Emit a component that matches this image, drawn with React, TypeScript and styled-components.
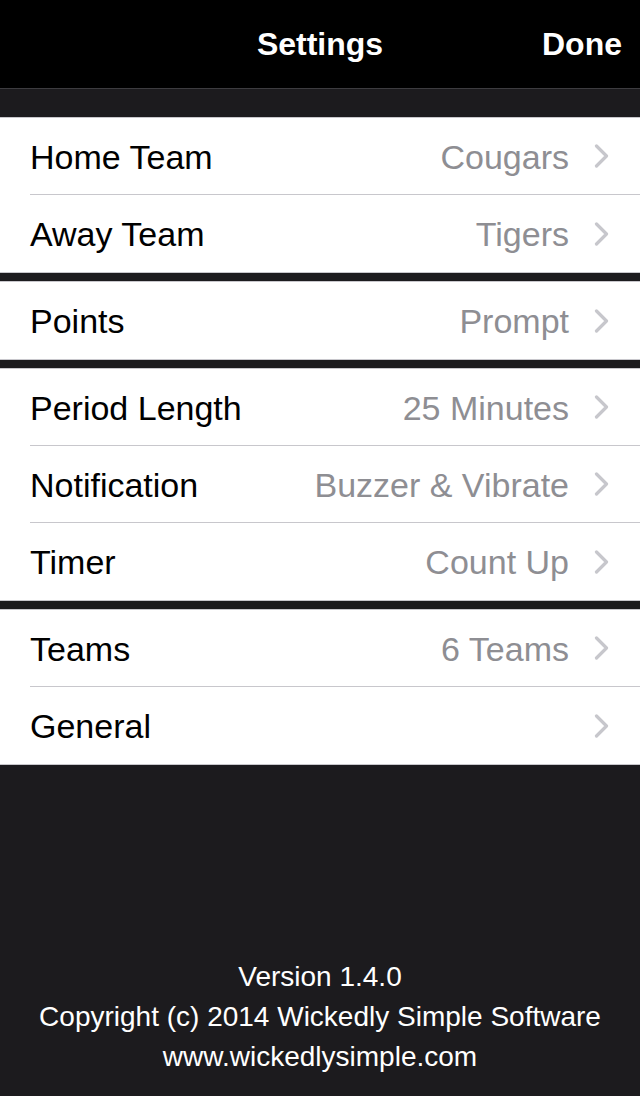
import styled, { createGlobalStyle } from "styled-components"

const GlobalStyle = createGlobalStyle`
    html, body {
        margin: 0;
        padding: 0;
        background: #1c1b1e;
    }
    * {
        box-sizing: border-box;
    }
`

const Screen = styled.div`
    width: 640px;
    min-height: 1096px;
    display: flex;
    flex-direction: column;
    background: #1c1b1e;
    font-family: "Liberation Sans", Arial, sans-serif;
`

const NavBar = styled.div`
    height: 89px;
    background: #000;
    border-bottom: 1px solid #3d3c40;
    display: grid;
    grid-template-columns: 1fr auto 1fr;
    align-items: center;
    padding: 0 18px 0;
    color: #fff;
    font-size: 32px;
    font-weight: bold;
`

const NavTitle = styled.div`
    grid-column: 2;
`

const NavButton = styled.div`
    grid-column: 3;
    justify-self: end;
`

const Groups = styled.div`
    display: flex;
    flex-direction: column;
    gap: 8px;
    padding-top: 28px;
`

const Group = styled.div`
    background: #fff;
    border-top: 1px solid #c8c7cc;
    border-bottom: 1px solid #c8c7cc;
`

const Row = styled.div<{ $last?: boolean }>`
    height: 77px;
    margin-left: 30px;
    padding-right: 31px;
    display: flex;
    align-items: center;
    border-bottom: ${(p) => (p.$last ? "none" : "1px solid #c8c7cc")};
    font-size: 34px;
`

const Label = styled.div`
    flex: 1;
    color: #000;
    padding-top: 2px;
`

const Value = styled.div`
    color: #8e8e93;
    padding-top: 2px;
    margin-right: 25px;
`

const Chevron = () => (
    <svg width="15" height="24" viewBox="0 0 15 24">
        <path d="M2.5 2 L12.5 12 L2.5 22" fill="none" stroke="#c7c7cc" strokeWidth="3.2" strokeLinecap="round" strokeLinejoin="round" />
    </svg>
)

const Footer = styled.div`
    margin-top: auto;
    padding-bottom: 19px;
    display: flex;
    flex-direction: column;
    align-items: center;
    color: #fff;
    font-size: 28px;
    line-height: 40px;
`

const groups = [
    [
        { label: "Home Team", value: "Cougars" },
        { label: "Away Team", value: "Tigers" },
    ],
    [{ label: "Points", value: "Prompt" }],
    [
        { label: "Period Length", value: "25 Minutes" },
        { label: "Notification", value: "Buzzer & Vibrate" },
        { label: "Timer", value: "Count Up" },
    ],
    [
        { label: "Teams", value: "6 Teams" },
        { label: "General", value: "" },
    ],
]

export default function App() {
    return (
        <Screen>
            <GlobalStyle />
            <NavBar>
                <NavTitle>Settings</NavTitle>
                <NavButton>Done</NavButton>
            </NavBar>
            <Groups>
                {groups.map((rows, gi) => (
                    <Group key={gi}>
                        {rows.map((row, idx) => (
                            <Row key={row.label} $last={idx === rows.length - 1}>
                                <Label>{row.label}</Label>
                                <Value>{row.value}</Value>
                                <Chevron />
                            </Row>
                        ))}
                    </Group>
                ))}
            </Groups>
            <Footer>
                <div>Version 1.4.0</div>
                <div>Copyright (c) 2014 Wickedly Simple Software</div>
                <div>www.wickedlysimple.com</div>
            </Footer>
        </Screen>
    )
}
